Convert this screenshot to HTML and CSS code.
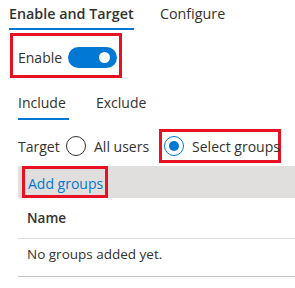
FILE: index.html
```
<!DOCTYPE html>
<html>
<head>
<meta charset="utf-8">
<link rel="stylesheet" href="styles.css">
</head>
<body>
<div class="page">
  <div class="tabs">
    <div class="tab active">Enable and Target</div>
    <div class="tab">Configure</div>
  </div>
  <div class="enable-box">
    <span class="label">Enable</span>
    <span class="toggle"><span class="knob"></span></span>
  </div>
  <div class="subtabs">
    <div class="subtab active">Include</div>
    <div class="subtab">Exclude</div>
  </div>
  <div class="target-row">
    <span class="target-label">Target</span>
    <span class="radio"><span class="circle"></span><span>All users</span></span>
    <span class="radio selected boxed"><span class="circle"><span class="dot"></span></span><span>Select groups</span></span>
  </div>
  <div class="cmdbar">
    <span class="add-btn">Add groups</span>
  </div>
  <div class="table">
    <div class="th">Name</div>
    <div class="td">No groups added yet.</div>
  </div>
</div>
</body>
</html>
```
FILE: styles.css
```
* { box-sizing: border-box; }
html, body { margin: 0; padding: 0; background: #fff; }
body {
  font-family: "Open Sans", "Noto Sans", sans-serif;
  color: #323130;
  font-size: 14px;
  white-space: nowrap;
}
.page { width: 295px; height: 288px; overflow: hidden; }

.tabs {
  display: flex;
  padding-left: 9px;
  height: 30px;
}
.tab {
  font-size: 14.3px;
  line-height: 27px;
  height: 30px;
  border-bottom: 2px solid transparent;
}
.tab.active {
  width: 125px;
  font-weight: 600;
  border-bottom-color: #0078d4;
  margin-right: 26px;
}

.enable-box {
  margin: 3px 0 0 10px;
  width: 112px;
  height: 45px;
  border: 3px solid #e81123;
  display: flex;
  align-items: center;
  padding: 4px 2px 0 5px;
  gap: 9px;
}
.enable-box .label { font-size: 14px; width: 41px; }
.toggle {
  width: 49px;
  height: 21px;
  border-radius: 11px;
  background: #0078d4;
  display: flex;
  align-items: center;
  justify-content: flex-end;
  padding-right: 7px;
}
.knob {
  width: 11px; height: 11px; border-radius: 50%; background: #fff;
}

.subtabs {
  display: flex;
  gap: 27px;
  padding-left: 18px;
  margin-top: 11px;
}
.subtab {
  font-size: 14px;
  line-height: 28px;
  height: 31px;
  border-bottom: 2px solid transparent;
}
.subtab.active { border-bottom-color: #0078d4; width: 51px; }

.target-row {
  display: flex;
  align-items: center;
  padding-left: 18px;
  margin-top: 9px;
  height: 34px;
  font-size: 14px;
}
.target-label { margin-right: 10px; width: 38px; }
.radio { display: flex; align-items: center; gap: 8px; }
.radio + .radio { margin-left: 10px; }
.circle {
  width: 20px; height: 20px; border-radius: 50%;
  border: 1px solid #323130;
  display: flex; align-items: center; justify-content: center;
  flex: none;
}
.selected .circle { border-color: #0078d4; }
.dot { width: 10px; height: 10px; border-radius: 50%; background: #0078d4; }
.boxed {
  border: 3px solid #e81123;
  height: 34px;
  padding: 0 0 0 2px;
  width: 122px;
}

.cmdbar {
  margin: 3px 0 0 18px;
  height: 32px;
  background: #e1dfdd;
  display: flex;
  align-items: stretch;
}
.add-btn {
  margin-left: 4px;
  border: 3px solid #e81123;
  color: #0078d4;
  font-size: 14px;
  padding: 3px 3px 0 3px;
  display: flex;
  align-items: center;
  width: 86px;
}

.table { margin-left: 18px; }
.th {
  font-weight: 600;
  font-size: 13.5px;
  height: 41px;
  line-height: 40px;
  padding-left: 9px;
  border-bottom: 1px solid #e1dfdd;
}
.td {
  font-size: 13.5px;
  height: 38px;
  line-height: 30px;
  padding-left: 9px;
  border-bottom: 1px solid #c8c6c4;
}
```
